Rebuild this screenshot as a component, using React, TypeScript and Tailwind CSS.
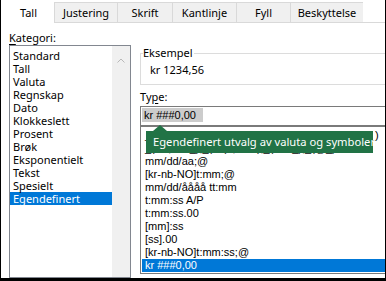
import React from "react";

const cats = [
  "Standard",
  "Tall",
  "Valuta",
  "Regnskap",
  "Dato",
  "Klokkeslett",
  "Prosent",
  "Brøk",
  "Eksponentielt",
  "Tekst",
  "Spesielt",
  "Egendefinert",
];

const types = [
  '_(* #,##0.00_);_(* \\(#,##0.00\\);_(* "-"??_);_(@_)',
  '_(* #,##0_);_(* \\(#,##0\\);_(* "-"_);_(@_)',
  "mm/dd/aa;@",
  "[kr-nb-NO]t:mm;@",
  "mm/dd/åååå tt:mm",
  "t:mm:ss A/P",
  "t:mm:ss.00",
  "[mm]:ss",
  "[ss].00",
  "[kr-nb-NO]t:mm:ss;@",
  "kr ###0,00",
];

const tabs = [
  { label: "Justering", w: "w-[63px]" },
  { label: "Skrift", w: "w-[55px]" },
  { label: "Kantlinje", w: "w-[64px]" },
  { label: "Fyll", w: "w-[54px]" },
  { label: "Beskyttelse", w: "w-[73px]" },
];

export default function App() {
  return (
    <div className="w-[386px] h-[281px] bg-white overflow-hidden border-l border-r border-b-[3px] border-black flex flex-col text-black text-[11px] font-['Noto_Sans',sans-serif]">
      {/* Tabs */}
      <div className="flex h-[23px] shrink-0">
        <div className="w-[53px] h-[23px] pt-[5px] leading-[15px] text-center pl-[2px]">Tall</div>
        {tabs.map((t) => (
          <div
            key={t.label}
            className={`${t.w} mt-[2px] h-[21px] pt-[2px] leading-[15px] text-center bg-[#f0f0f0] border-t border-l border-b border-[#d9d9d9] last:border-r`}
          >
            {t.label}
          </div>
        ))}
        <div className="flex-1 border-b border-[#d9d9d9]" />
      </div>

      {/* Content */}
      <div className="flex flex-1 min-h-0">
        {/* Left column */}
        <div className="flex flex-col pl-[8px] w-[130px] shrink-0">
          <div className="mt-[8px] h-[14px] leading-[14px]">
            <span className="underline underline-offset-[2px]">K</span>ategori:
          </div>
          <div className="flex flex-1 border border-[#828790]">
            <div className="w-[102px] pt-[3px]">
              {cats.map((c) => (
                <div
                  key={c}
                  className={`h-[13px] leading-[13px] pl-[3px] whitespace-nowrap ${
                    c === "Egendefinert" ? "bg-[#0078d7] text-white" : ""
                  }`}
                >
                  {c}
                </div>
              ))}
            </div>
            <div className="w-[18px] bg-[#f0f0f0] flex justify-center pt-[12px]">
              <svg width="8" height="5" viewBox="0 0 8 5">
                <polyline points="0.5,4.5 4,1 7.5,4.5" fill="none" stroke="#b8b8b8" strokeWidth="1" />
              </svg>
            </div>
          </div>
        </div>

        {/* Right column */}
        <div className="ml-[9px] w-[270px] shrink-0 flex flex-col">
          <div className="relative mt-[30px] h-[32px] border border-[#dcdcdc] flex items-center">
            <span className="absolute -top-[9px] left-[2px] bg-white pr-[1px] leading-[15px]">Eksempel</span>
            <span className="pl-[9px] leading-[15px]">kr 1234,56</span>
          </div>

          <div className="mt-[4px] h-[15px] leading-[15px]">
            Ty<span className="underline underline-offset-[2px]">p</span>e:
          </div>

          <div className="mt-[2px] h-[20px] border border-[#7a7a7a] pt-px pl-px">
            <div className="w-[61px] h-[14px] bg-[#cccccc] pl-[2px] leading-[14px] font-['Liberation_Sans',Arial,sans-serif]">
              kr ###0,00
            </div>
          </div>

          <div className="relative h-[148px] border border-[#7a7a7a] pt-[2px] font-['Liberation_Sans',Arial,sans-serif]">
            {types.map((t, i) => (
              <div
                key={i}
                className={`h-[13px] leading-[13px] ml-px pl-[3px] whitespace-nowrap ${
                  i === types.length - 1 ? "bg-[#0078d7] text-white" : ""
                }`}
              >
                {t}
              </div>
            ))}

            {/* Tooltip */}
            <div className="absolute top-[4px] left-[5px] w-[227px] h-[22px] bg-[#217346] text-white pl-[7px] leading-[22px] font-['Noto_Sans',sans-serif] text-[11.2px] whitespace-nowrap">
              <svg className="absolute -top-[6px] left-[7px]" width="14" height="6" viewBox="0 0 14 6">
                <polygon points="0,6 7,0 14,6" fill="#217346" />
              </svg>
              Egendefinert utvalg av valuta og symboler
            </div>
          </div>
        </div>
      </div>
    </div>
  );
}
